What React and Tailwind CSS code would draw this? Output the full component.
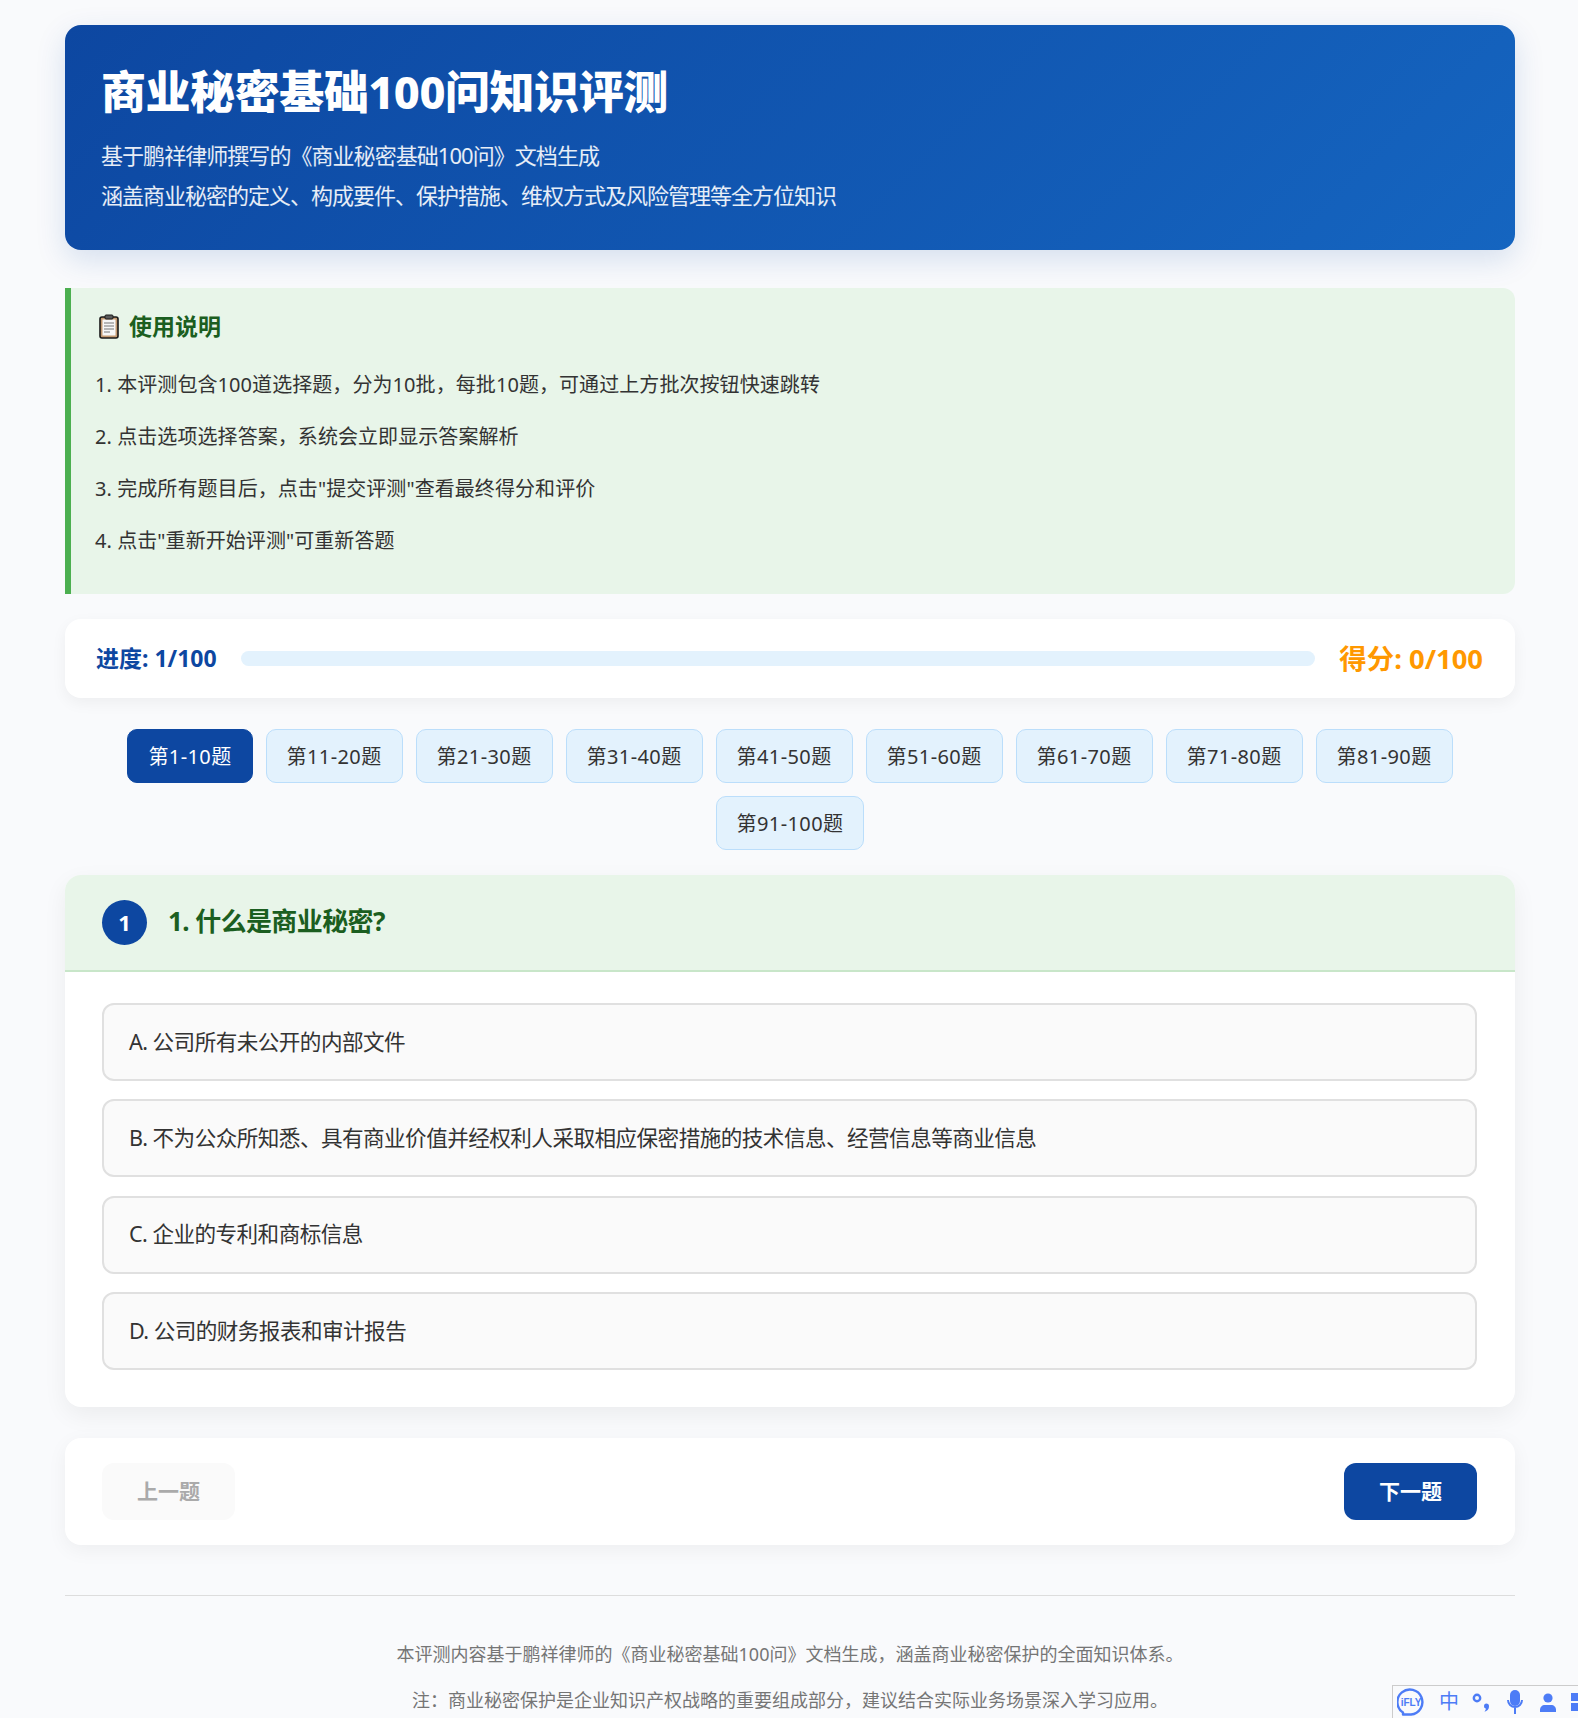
import React from "react";

const batches = [
  "第1-10题",
  "第11-20题",
  "第21-30题",
  "第31-40题",
  "第41-50题",
  "第51-60题",
  "第61-70题",
  "第71-80题",
  "第81-90题",
  "第91-100题",
];

const notes = [
  "1. 本评测包含100道选择题，分为10批，每批10题，可通过上方批次按钮快速跳转",
  "2. 点击选项选择答案，系统会立即显示答案解析",
  '3. 完成所有题目后，点击"提交评测"查看最终得分和评价',
  '4. 点击"重新开始评测"可重新答题',
];

const options = [
  "A. 公司所有未公开的内部文件",
  "B. 不为公众所知悉、具有商业价值并经权利人采取相应保密措施的技术信息、经营信息等商业信息",
  "C. 企业的专利和商标信息",
  "D. 公司的财务报表和审计报告",
];

const ClipboardIcon = () => (
  <svg width="20" height="25" viewBox="0 0 20 25" className="ml-[3px] shrink-0">
    <rect x="1" y="3" width="18" height="21" rx="2" fill="#c49a72" stroke="#1a1a1a" strokeWidth="1.6" />
    <rect x="3.5" y="5.5" width="13" height="16" fill="#f7f7f7" />
    <rect x="6" y="1" width="8" height="4" rx="1" fill="#5a5a5a" stroke="#1a1a1a" />
    <path d="M5 9h10M5 12h10M5 15h10M5 18h6" stroke="#777777" strokeWidth="1.2" />
  </svg>
);

// 右下角输入法工具条
const ImeBar = () => (
  <div className="absolute right-0 bottom-0 flex h-[33px] w-[186px] items-center overflow-hidden border-t border-l border-[#cccccc] bg-[#f9fafc]">
    <svg width="28" height="28" viewBox="0 0 28 28" className="ml-[4px] shrink-0">
      <path d="M6 24.5A12.5 12.5 0 1 1 14 26.5H6z" fill="none" stroke="#4d7cf6" strokeWidth="2.4" strokeLinejoin="round" />
      <text x="14" y="17.5" textAnchor="middle" fontSize="10" fontWeight="700" fill="#4d7cf6" fontFamily="Liberation Sans">
        iFLY
      </text>
    </svg>
    <span className="ml-[14px] w-[20px] shrink-0 text-[20px] leading-none text-[#4d7cf6]">中</span>
    <svg width="20" height="24" viewBox="0 0 20 24" className="ml-[12px] shrink-0">
      <circle cx="6" cy="8" r="3.2" fill="none" stroke="#4d7cf6" strokeWidth="2.4" />
      <path d="M15 13.5a3 3 0 0 1 3 3.2c0 2.6-2 4.2-4.5 5 1.2-1.6 1.5-2.6 1.2-3.2a2.6 2.6 0 0 1 .3-5z" fill="#4d7cf6" />
    </svg>
    <svg width="20" height="26" viewBox="0 0 20 26" className="ml-[14px] shrink-0">
      <rect x="5" y="1" width="10" height="16" rx="5" fill="#4d7cf6" />
      <path d="M3 11a7 7 0 0 0 14 0M10 18v7" fill="none" stroke="#4d7cf6" strokeWidth="2" />
    </svg>
    <svg width="20" height="24" viewBox="0 0 20 24" className="ml-[13px] shrink-0">
      <circle cx="10" cy="8" r="4.6" fill="#4d7cf6" />
      <path d="M2 22v-2c0-3 2-5 5-5h6c3 0 5 2 5 5v2z" fill="#4d7cf6" />
    </svg>
    <div className="ml-[13px] flex shrink-0 flex-col gap-[2px]">
      <span className="block h-[8px] w-[8px] bg-[#4d7cf6]"></span>
      <span className="block h-[8px] w-[8px] bg-[#4d7cf6]"></span>
    </div>
  </div>
);

const App = () => {
  return (
    <div className="relative h-[1718px] overflow-hidden bg-[#f9fafc] font-['Noto_Sans','Noto_Sans_CJK_SC',sans-serif] text-[#333333]">
      <div className="ml-[65px] w-[1450px] pt-[25px]">
        {/* 顶部标题 */}
        <header className="h-[225px] rounded-[16px] bg-[linear-gradient(135deg,#0d47a1,#1565c0)] pt-[37px] pl-[36px] text-white shadow-[0_10px_30px_rgba(13,71,161,0.15)]">
          <h1 className="text-[45px] leading-[60px] font-extrabold tracking-[-0.45px]">商业秘密基础100问知识评测</h1>
          <p className="mt-[13px] text-[22px] leading-[40px] tracking-[-0.95px] text-white/90">基于鹏祥律师撰写的《商业秘密基础100问》文档生成</p>
          <p className="text-[22px] leading-[40px] tracking-[-1px] text-white/90">涵盖商业秘密的定义、构成要件、保护措施、维权方式及风险管理等全方位知识</p>
        </header>

        {/* 使用说明 */}
        <section className="mt-[38px] h-[306px] rounded-r-[12px] border-l-[6px] border-[#4caf50] bg-[#e8f5e9] pt-[22px] pl-[25px]">
          <h3 className="flex items-center gap-[10px] text-[23px] leading-[32px] font-bold text-[#1b5e20]">
            <ClipboardIcon />
            使用说明
          </h3>
          <ul className="mt-[17px] -ml-[1px]">
            {notes.map((note) => (
              <li key={note} className="text-[20px] leading-[52px] tracking-[0.07px]">
                {note}
              </li>
            ))}
          </ul>
        </section>

        {/* 进度条 */}
        <section className="mt-[25px] flex h-[79px] items-center rounded-[16px] bg-white pr-[32px] pl-[31px] shadow-[0_5px_15px_rgba(0,0,0,0.05)]">
          <div className="text-[23px] font-bold text-[#0d47a1]">进度: 1/100</div>
          <div className="mx-[24px] h-[15px] flex-1 rounded-full bg-[#e3f2fd]"></div>
          <div className="text-[27.4px] font-bold text-[#ff9800]">得分: 0/100</div>
        </section>

        {/* 批次按钮 */}
        <nav className="mt-[31px] flex flex-wrap justify-center gap-[13px]">
          {batches.map((label, i) => (
            <button
              key={label}
              className={
                i === 0
                  ? "h-[54px] rounded-[10px] border border-[#0d47a1] bg-[#0d47a1] px-[20px] pt-[1px] text-[20px] tracking-[0.4px] text-white"
                  : "h-[54px] rounded-[10px] border border-[#bbdefb] bg-[#e3f2fd] px-[20px] pt-[1px] text-[20px] tracking-[0.4px]"
              }
            >
              {label}
            </button>
          ))}
        </nav>

        {/* 题目 */}
        <section className="mt-[25px] h-[532px] overflow-hidden rounded-[16px] bg-white shadow-[0_8px_25px_rgba(0,0,0,0.06)]">
          <div className="flex h-[97px] items-center gap-[21px] border-b-2 border-[#c8e6c9] bg-[#e8f5e9] px-[37px]">
            <div className="flex h-[45px] w-[45px] items-center justify-center rounded-full bg-[#0d47a1] pb-[1px] text-[22px] font-bold text-white">1</div>
            <h2 className="pb-[2px] text-[26px] font-bold tracking-[-0.6px] text-[#1b5e20]">1. 什么是商业秘密?</h2>
          </div>
          <div className="flex flex-col gap-[18.3px] pt-[31px] pr-[38px] pl-[37px]">
            {options.map((option) => (
              <div key={option} className="flex h-[78px] items-center rounded-[12px] border-2 border-[#e0e0e0] bg-[#fafafa] pl-[25px] text-[21.6px] tracking-[-0.55px]">
                {option}
              </div>
            ))}
          </div>
        </section>

        {/* 翻页 */}
        <section className="mt-[31px] flex h-[107px] items-center justify-between rounded-[16px] bg-white pr-[38px] pl-[37px] shadow-[0_5px_20px_rgba(0,0,0,0.05)]">
          <button className="h-[57px] w-[133px] rounded-[12px] bg-[#fafafa] pt-[1px] text-[21px] font-bold text-[#aaaaaa]">上一题</button>
          <button className="h-[57px] w-[133px] rounded-[12px] bg-[#0d47a1] pt-[1px] text-[21px] font-bold text-white">下一题</button>
        </section>

        {/* 页脚 */}
        <footer className="mt-[50px] border-t border-[#dddddd] pt-[35px] text-center text-[18px] leading-[46px] text-[#757575]">
          <p>本评测内容基于鹏祥律师的《商业秘密基础100问》文档生成，涵盖商业秘密保护的全面知识体系。</p>
          <p>注：商业秘密保护是企业知识产权战略的重要组成部分，建议结合实际业务场景深入学习应用。</p>
        </footer>
      </div>
      <ImeBar />
    </div>
  );
};

export default App;
